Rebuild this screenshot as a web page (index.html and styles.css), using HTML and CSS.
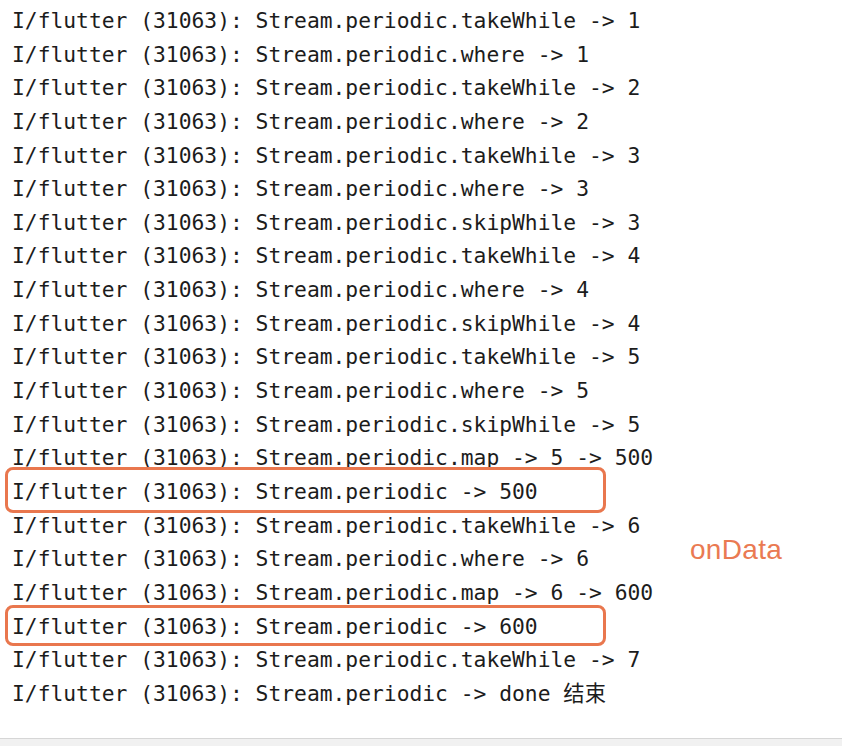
FILE: index.html
```html
<!DOCTYPE html>
<html lang="zh">
<head>
<meta charset="utf-8">
<title>flutter log</title>
<link rel="stylesheet" href="styles.css">
</head>
<body>
<main class="page">
  <div class="log">
    <div class="row">I/flutter (31063): Stream.periodic.takeWhile -&gt; 1</div>
    <div class="row">I/flutter (31063): Stream.periodic.where -&gt; 1</div>
    <div class="row">I/flutter (31063): Stream.periodic.takeWhile -&gt; 2</div>
    <div class="row">I/flutter (31063): Stream.periodic.where -&gt; 2</div>
    <div class="row">I/flutter (31063): Stream.periodic.takeWhile -&gt; 3</div>
    <div class="row">I/flutter (31063): Stream.periodic.where -&gt; 3</div>
    <div class="row">I/flutter (31063): Stream.periodic.skipWhile -&gt; 3</div>
    <div class="row">I/flutter (31063): Stream.periodic.takeWhile -&gt; 4</div>
    <div class="row">I/flutter (31063): Stream.periodic.where -&gt; 4</div>
    <div class="row">I/flutter (31063): Stream.periodic.skipWhile -&gt; 4</div>
    <div class="row">I/flutter (31063): Stream.periodic.takeWhile -&gt; 5</div>
    <div class="row">I/flutter (31063): Stream.periodic.where -&gt; 5</div>
    <div class="row">I/flutter (31063): Stream.periodic.skipWhile -&gt; 5</div>
    <div class="row">I/flutter (31063): Stream.periodic.map -&gt; 5 -&gt; 500</div>
    <div class="row hl hl-a">I/flutter (31063): Stream.periodic -&gt; 500</div>
    <div class="row">I/flutter (31063): Stream.periodic.takeWhile -&gt; 6</div>
    <div class="row">I/flutter (31063): Stream.periodic.where -&gt; 6</div>
    <div class="row">I/flutter (31063): Stream.periodic.map -&gt; 6 -&gt; 600</div>
    <div class="row hl hl-b">I/flutter (31063): Stream.periodic -&gt; 600</div>
    <div class="row">I/flutter (31063): Stream.periodic.takeWhile -&gt; 7</div>
    <div class="row">I/flutter (31063): Stream.periodic -&gt; done 结束</div>
  </div>
  <span class="note">onData</span>
</main>
<footer class="bar"></footer>
</body>
</html>
```
FILE: styles.css
```css
html, body {
  margin: 0;
  padding: 0;
  background: #ffffff;
}
body {
  width: 842px;
  height: 746px;
  overflow: hidden;
  display: flex;
  flex-direction: column;
}
.page {
  position: relative;
  flex: 1;
  padding: 4px 0 0 12px;
}
.log {
  font-family: "DejaVu Sans Mono", "Noto Sans CJK SC", monospace;
  font-size: 21.3px;
  line-height: 33.65px;
  color: #1c1c1c;
}
.row {
  position: relative;
  white-space: pre;
  height: 33.65px;
}
.hl::before {
  content: "";
  position: absolute;
  left: -7px;
  width: 595px;
  border: 3px solid #e9774e;
  border-radius: 8px;
}
.hl-a::before {
  top: -8px;
  height: 40px;
}
.hl-b::before {
  top: -5px;
  height: 35px;
}
.note {
  position: absolute;
  left: 690px;
  top: 534px;
  font-family: "Liberation Sans", Arial, sans-serif;
  font-size: 28px;
  color: #ea7a52;
  letter-spacing: 0.3px;
}
.bar {
  height: 7px;
  border-top: 1px solid #d6d6d6;
  background: #f1f1f1;
}
```
